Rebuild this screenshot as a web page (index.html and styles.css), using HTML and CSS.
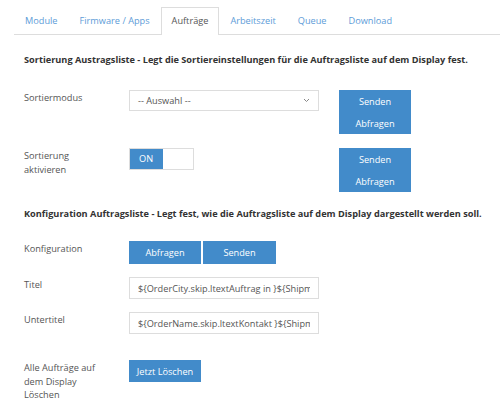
FILE: index.html
```html
<!DOCTYPE html>
<html lang="de">
<head>
    <meta charset="UTF-8">
    <title>Aufträge</title>
    <link rel="stylesheet" href="styles.css">
</head>
<body>
    <ul class="tabs">
        <li><a href="#">Module</a></li>
        <li><a href="#">Firmware / Apps</a></li>
        <li class="active"><a href="#">Aufträge</a></li>
        <li><a href="#">Arbeitszeit</a></li>
        <li><a href="#">Queue</a></li>
        <li><a href="#">Download</a></li>
    </ul>

    <div class="content">
        <h4 class="section-title">Sortierung Austragsliste - Legt die Sortiereinstellungen für die Auftragsliste auf dem Display fest.</h4>

        <div class="row">
            <label class="row-label">Sortiermodus</label>
            <div class="select-box">
                <span>-- Auswahl --</span>
                <svg width="7" height="5" viewBox="0 0 7 5"><path d="M1 1 L3.5 3.5 L6 1" fill="none" stroke="#888" stroke-width="1"/></svg>
            </div>
            <div class="btn-stack">
                <button class="btn">Senden</button>
                <button class="btn">Abfragen</button>
            </div>
        </div>

        <div class="row">
            <label class="row-label">Sortierung aktivieren</label>
            <div class="control">
                <div class="toggle">
                    <span class="toggle-on">ON</span>
                    <span class="toggle-off"></span>
                </div>
            </div>
            <div class="btn-stack">
                <button class="btn">Senden</button>
                <button class="btn">Abfragen</button>
            </div>
        </div>

        <h4 class="section-title second">Konfiguration Auftragsliste - Legt fest, wie die Auftragsliste auf dem Display dargestellt werden soll.</h4>

        <div class="row tight">
            <label class="row-label">Konfiguration</label>
            <div class="btn-group">
                <button class="btn">Abfragen</button>
                <button class="btn">Senden</button>
            </div>
        </div>

        <div class="row tight">
            <label class="row-label">Titel</label>
            <input class="text-input" type="text" value="${OrderCity.skip.ltextAuftrag in }${ShipmentCity}">
        </div>

        <div class="row loose">
            <label class="row-label">Untertitel</label>
            <input class="text-input" type="text" value="${OrderName.skip.ltextKontakt }${ShipmentName}">
        </div>

        <div class="row">
            <label class="row-label">Alle Aufträge auf dem Display Löschen</label>
            <button class="btn">Jetzt Löschen</button>
        </div>
    </div>
</body>
</html>
```

FILE: styles.css
```css
body {
    margin: 0;
    font-family: "Open Sans", "Liberation Sans", sans-serif;
    font-size: 9.2px;
    color: #555;
    background: #fff;
}
.tabs {
    list-style: none;
    margin: 7px 0 0 14px;
    padding: 0;
    display: flex;
    border-bottom: 1px solid #ddd;
    height: 27px;
}
.tabs li {
    margin-bottom: -1px;
}
.tabs a {
    display: block;
    padding: 0 10px;
    line-height: 26px;
    color: #5d9cd8;
    text-decoration: none;
    border: 1px solid transparent;
    border-bottom: none;
}
.tabs li.active a {
    color: #555;
    background: #fff;
    border-color: #ddd;
    height: 27px;
}
.content {
    padding: 0 24px;
}
.section-title {
    margin: 18px 0 23px;
    font-size: 9.2px;
    font-weight: bold;
    color: #333;
    line-height: 14px;
    white-space: nowrap;
}
.section-title.second {
    margin: 15px 0 20px;
}
.row {
    display: flex;
    align-items: flex-start;
    margin-bottom: 14px;
}
.row.tight {
    margin-bottom: 13px;
}
.row.loose {
    margin-bottom: 26px;
}
.row:last-child {
    margin-bottom: 0;
}
.row-label {
    width: 80px;
    margin-right: 25px;
    padding-top: 1px;
    line-height: 13.5px;
}
.select-box {
    width: 190px;
    height: 21px;
    box-sizing: border-box;
    border: 1px solid #ddd;
    display: flex;
    align-items: center;
    justify-content: space-between;
    padding: 0 8px;
    margin-right: 20px;
}
.control {
    width: 190px;
    margin-right: 20px;
}
.toggle {
    display: flex;
    width: 65px;
    height: 22px;
    box-sizing: border-box;
    border: 1px solid #ddd;
}
.toggle-on {
    width: 33px;
    background: #428bca;
    color: #fff;
    line-height: 20px;
    padding-left: 9px;
    box-sizing: border-box;
}
.toggle-off {
    flex: 1;
    background: #fff;
}
.btn-stack {
    display: flex;
    flex-direction: column;
}
.btn {
    width: 72px;
    height: 22px;
    background: #428bca;
    color: #fff;
    border: none;
    font-family: inherit;
    font-size: 9.2px;
    padding: 0;
    cursor: pointer;
}
.btn-group {
    display: flex;
    gap: 2px;
}
.btn-group .btn {
    height: 23px;
}
.btn-group .btn:last-child {
    width: 73px;
}
.text-input {
    width: 190px;
    height: 22px;
    box-sizing: border-box;
    border: 1px solid #ddd;
    padding: 0 8px;
    font-family: inherit;
    font-size: 9.2px;
    color: #555;
    outline: none;
}
```
